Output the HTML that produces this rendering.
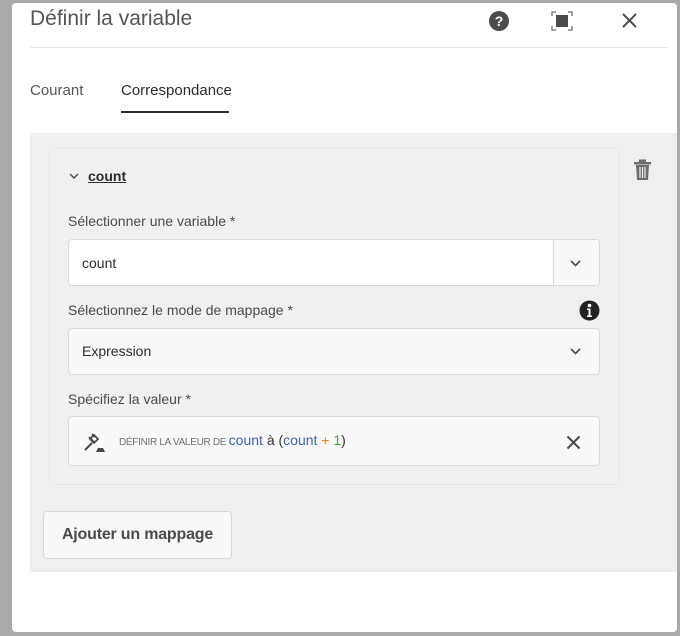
<!DOCTYPE html>
<html><head><meta charset="utf-8"><style>
*{box-sizing:border-box;margin:0;padding:0}
body{width:680px;height:636px;background:#a9a9a9;font-family:"Liberation Sans",sans-serif;color:#4b4b4b;position:relative;overflow:hidden}
.a{position:absolute}
.dlg{left:12px;top:3px;width:665px;height:629px;background:#fff;border-radius:4px}
.lbl{font-size:14px;color:#4b4b4b}
.inp{border:1px solid #dadada;border-radius:4px;font-size:14px;color:#2c2c2c}
</style></head><body>
<div class="a dlg"></div>
<div class="a" style="left:30px;top:7px;font-size:21px;color:#555;font-weight:300">Définir la variable</div>
<svg class="a" style="left:488px;top:10px" width="22" height="22" viewBox="0 0 22 22"><circle cx="11" cy="11" r="10" fill="#4b4b4b"/><text x="11" y="16" text-anchor="middle" font-size="14" font-weight="bold" fill="#fff" font-family="Liberation Sans">?</text></svg>
<svg class="a" style="left:551px;top:11px" width="22" height="20" viewBox="0 0 22 20"><path d="M1 5V1h4M17 1h4v4M21 15v4h-4M5 19H1v-4" fill="none" stroke="#6e6e6e" stroke-width="1.3"/><rect x="5" y="4" width="12" height="12" fill="#4b4b4b"/></svg>
<svg class="a" style="left:621px;top:12px" width="17" height="17" viewBox="0 0 17 17"><path d="M2 2L15 15M15 2L2 15" stroke="#4b4b4b" stroke-width="2"/></svg>
<div class="a" style="left:30px;top:47px;width:638px;height:1px;background:#e8e8e8"></div>
<div class="a" style="left:30px;top:82px;font-size:15px;color:#555">Courant</div>
<div class="a" style="left:121px;top:82px;font-size:15px;color:#2c2c2c">Correspondance</div>
<div class="a" style="left:121px;top:111px;width:108px;height:2px;background:#2c2c2c"></div>
<div class="a" style="left:30px;top:133px;width:647px;height:439px;background:#efefef"></div>
<div class="a" style="left:49px;top:148px;width:570px;height:337px;border:1px solid #e8e8e8;background:#f0f0f0;border-radius:3px"></div>
<svg class="a" style="left:633px;top:159px" width="19" height="22" viewBox="0 0 19 22"><rect x="1" y="3" width="17" height="2.5" fill="#6e6e6e"/><rect x="6" y="0.5" width="7" height="3" fill="#6e6e6e"/><path d="M3 6h13l-1 15H4z" fill="#6e6e6e"/><path d="M7 8v11M9.5 8v11M12 8v11" stroke="#efefef" stroke-width="1.2"/></svg>
<svg class="a" style="left:69px;top:172px" width="10" height="8" viewBox="0 0 10 8"><path d="M1 2l4 4 4-4" fill="none" stroke="#4b4b4b" stroke-width="1.4"/></svg>
<div class="a" style="left:88px;top:168px;font-size:14px;font-weight:bold;text-decoration:underline;color:#2c2c2c">count</div>
<div class="a lbl" style="left:68px;top:213px">Sélectionner une variable *</div>
<div class="a inp" style="left:68px;top:239px;width:532px;height:47px;background:#fff"></div>
<div class="a" style="left:553px;top:240px;width:46px;height:45px;background:#f8f8f8;border-left:1px solid #dadada;border-radius:0 4px 4px 0"></div>
<div class="a" style="left:82px;top:255px;font-size:14px;color:#2c2c2c">count</div>
<svg class="a" style="left:570px;top:260px" width="11" height="7" viewBox="0 0 11 7"><path d="M1 1l4.5 4.5L10 1" fill="none" stroke="#4b4b4b" stroke-width="1.6"/></svg>
<div class="a lbl" style="left:68px;top:302px">Sélectionnez le mode de mappage *</div>
<svg class="a" style="left:579px;top:300px" width="21" height="21" viewBox="0 0 21 21"><circle cx="10.5" cy="10.5" r="10" fill="#222"/><circle cx="10.5" cy="5.5" r="1.8" fill="#fff"/><path d="M8 8.5h3.5v7H13v1.5H8v-1.5h1.5v-5.5H8z" fill="#fff"/></svg>
<div class="a inp" style="left:68px;top:328px;width:532px;height:47px;background:#f8f8f8"></div>
<div class="a" style="left:82px;top:343px;font-size:14px;color:#2c2c2c">Expression</div>
<svg class="a" style="left:570px;top:348px" width="11" height="7" viewBox="0 0 11 7"><path d="M1 1l4.5 4.5L10 1" fill="none" stroke="#4b4b4b" stroke-width="1.6"/></svg>
<div class="a lbl" style="left:68px;top:391px">Spécifiez la valeur *</div>
<div class="a inp" style="left:68px;top:416px;width:532px;height:50px;background:#f8f8f8"></div>
<svg class="a" style="left:83px;top:432px" width="24" height="22" viewBox="0 0 24 22"><path d="M9 2l3 3M6 5l6 6M11 3l4 4-4 4-4-4z" fill="none" stroke="#4b4b4b" stroke-width="1.8"/><path d="M9 11L2 18" stroke="#4b4b4b" stroke-width="2"/><path d="M13 20h9l-2-4h-5z" fill="#4b4b4b"/></svg>
<div class="a" style="left:119px;top:432px;font-size:14px;white-space:nowrap"><span style="font-size:10px;color:#707070;letter-spacing:-0.3px">DÉFINIR LA VALEUR DE </span><span style="color:#3f62b0">count</span> <span style="color:#333">à (</span><span style="color:#3f62b0">count</span> <span style="color:#e6862d">+</span> <span style="color:#4a9c4a">1</span><span style="color:#333">)</span></div>
<svg class="a" style="left:566px;top:435px" width="15" height="15" viewBox="0 0 15 15"><path d="M1.5 1.5l12 12M13.5 1.5l-12 12" stroke="#4b4b4b" stroke-width="2"/></svg>
<div class="a" style="left:43px;top:511px;width:189px;height:48px;border:1px solid #d6d6d6;border-radius:4px;background:#f8f8f8;font-size:16px;font-weight:bold;color:#4b4b4b;text-align:center;line-height:46px;letter-spacing:-0.2px">Ajouter un mappage</div>
</body></html>
